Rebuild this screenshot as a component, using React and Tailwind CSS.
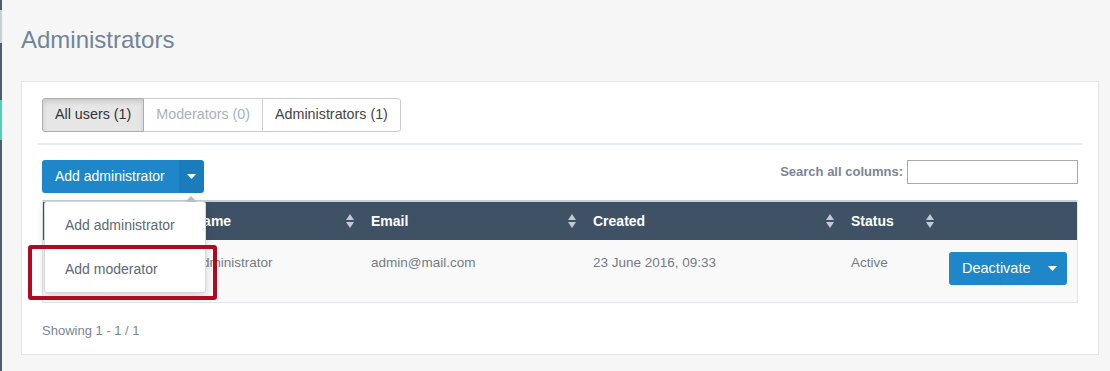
import React from "react";

// sort arrows used in table header
function SortIcon() {
  return (
    <svg width="8" height="14" viewBox="0 0 8 14" className="shrink-0">
      <path d="M4 0 L8 6 L0 6 Z" fill="#c3cad3" />
      <path d="M0 8 L8 8 L4 14 Z" fill="#c3cad3" />
    </svg>
  );
}

function Caret({ color = "#fff" }) {
  return (
    <svg width="9" height="5" viewBox="0 0 9 5">
      <path d="M0 0 L9 0 L4.5 5 Z" fill={color} />
    </svg>
  );
}

const COLS = [
  { key: "id", label: "ID", w: "w-[138px]" },
  { key: "name", label: "Name", w: "w-[178px]" },
  { key: "email", label: "Email", w: "w-[222px]" },
  { key: "created", label: "Created", w: "w-[258px]" },
  { key: "status", label: "Status", w: "w-[100px]" },
];

const ROW = {
  id: "1",
  name: "Administrator",
  email: "admin@mail.com",
  created: "23 June 2016, 09:33",
  status: "Active",
};

export default function App() {
  return (
    <div
      className="relative flex h-[371px] w-[1110px] overflow-hidden bg-[#f6f6f6] text-[#333]"
      style={{ fontFamily: '"Liberation Sans", Arial, sans-serif' }}
    >
      {/* left edge of sidebar */}
      <div className="flex w-[2px] shrink-0 flex-col">
        <div className="h-[10px] bg-[#4d5e70]" />
        <div className="h-[33px] bg-[#c9cfd6]" />
        <div className="h-[57px] bg-[#4d5e70]" />
        <div className="h-[40px] bg-[#4fcfb5]" />
        <div className="flex-1 bg-[#4d5e70]" />
      </div>

      <div className="flex-1 pl-[19px] pr-[11px] pt-[26px]">
        <h1 className="text-[24px] leading-[28px] text-[#71849a]">Administrators</h1>

        <div className="mt-[27px] h-[274px] border border-[#e3e5e8] bg-white px-[20px] pt-[16px]">
          {/* tabs */}
          <div className="flex text-[14.3px]">
            <div className="flex h-[34px] items-center rounded-l-[3px] border border-[#adadad] bg-[#e6e6e6] px-[12px] shadow-[inset_0_3px_5px_rgba(0,0,0,0.125)]">
              All users (1)
            </div>
            <div className="flex h-[34px] items-center border-y border-[#ccc] px-[12px] text-[#a9b1bb]">
              Moderators (0)
            </div>
            <div className="flex h-[34px] items-center rounded-r-[3px] border border-[#ccc] px-[12px] text-[#444]">
              Administrators (1)
            </div>
          </div>

          <div className="-mx-[5px] mt-[11px] h-[2px] bg-[#eaedf0]" />

          {/* toolbar */}
          <div className="mt-[15px] flex items-start justify-between">
            <div className="flex h-[33px] overflow-hidden rounded-[3px] text-[14px] text-white">
              <div className="flex items-center bg-[#1d87c9] pl-[13px] pr-[14px]">Add administrator</div>
              <div className="flex w-[25px] items-center justify-center bg-[#1a7dbb]">
                <Caret />
              </div>
            </div>
            <div className="flex items-center gap-[4px]">
              <span className="text-[13px] font-bold text-[#7b8594]">Search all columns:</span>
              <div className="h-[24px] w-[171px] border border-[#a9a9a9] bg-white" />
            </div>
          </div>

          {/* table */}
          <div className="mt-[7px] border-x border-b border-[#e3e5e8]">
            <div className="flex h-[40px] items-center border-t-2 border-[#c8ced5] bg-[#3e5165] text-[14px] font-bold text-white">
              {COLS.map((c) => (
                <div key={c.key} className={`${c.w} flex items-center justify-between pl-[12px] pr-[5px]`}>
                  <span>{c.label}</span>
                  <SortIcon />
                </div>
              ))}
              <div className="flex-1" />
            </div>
            <div className="flex h-[62px] items-start bg-[#f9f9f9] text-[13.5px] text-[#737b85]">
              {COLS.map((c) => (
                <div key={c.key} className={`${c.w} pl-[12px] pt-[13px]`}>
                  {ROW[c.key]}
                </div>
              ))}
              <div className="flex flex-1 justify-end pr-[10px] pt-[12px]">
                <div className="flex h-[33px] w-[118px] items-center justify-between rounded-[3px] bg-[#1d87c9] pl-[13px] pr-[10px] text-[14.5px] text-white">
                  <span>Deactivate</span>
                  <Caret />
                </div>
              </div>
            </div>
          </div>

          <div className="mt-[18px] text-[13px] text-[#7b8594]">Showing 1 - 1 / 1</div>
        </div>
      </div>

      {/* open dropdown menu */}
      <div className="absolute left-[44px] top-[201px] w-[162px] rounded-[3px] border border-[#d5d9de] bg-white py-[1px] text-[14px] text-[#5d6874] shadow-[0_3px_8px_rgba(0,0,0,0.15)]">
        <div className="absolute -top-[6px] left-[140px] h-0 w-0 border-x-[6px] border-b-[6px] border-x-transparent border-b-[#b8bec6]" />
        <div className="flex h-[44px] items-center pl-[20px]">Add administrator</div>
        <div className="flex h-[44px] items-center pl-[20px]">Add moderator</div>
      </div>

      {/* highlight box */}
      <div className="absolute left-[28px] top-[245px] h-[55px] w-[189px] rounded-[3px] border-[4px] border-[#b3091f]" />
    </div>
  );
}
